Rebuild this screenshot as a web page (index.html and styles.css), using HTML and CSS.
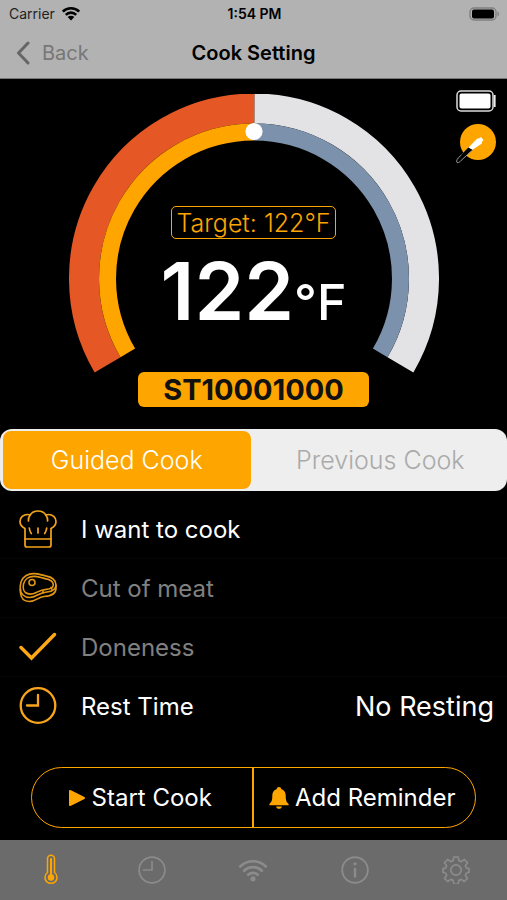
FILE: index.html
```html
<!DOCTYPE html>
<html lang="en">
<head>
<meta charset="utf-8">
<meta name="viewport" content="width=device-width, initial-scale=1">
<title>Cook Setting</title>
<link rel="stylesheet" href="styles.css">
</head>
<body>
<div class="app">
  <header class="top">
    <div class="status">
      <span class="carrier">Carrier
        <svg width="20" height="15" viewBox="0 0 20 15" aria-hidden="true">
          <g fill="none" stroke="#000" stroke-width="2.6">
            <path d="M1.8 5.6a11.6 11.6 0 0 1 16.4 0"/>
            <path d="M4.8 8.8a7.4 7.4 0 0 1 10.4 0"/>
          </g>
          <path d="M10 14.4 6.7 11.1a4.7 4.7 0 0 1 6.6 0z"/>
        </svg>
      </span>
      <time class="clock">1:54 PM</time>
      <svg class="phone-battery" width="31" height="14" viewBox="0 0 31 14" aria-hidden="true">
        <rect x="1" y="1" width="26" height="12" rx="4" fill="none" stroke="#808080" stroke-width="1.4"/>
        <rect x="3" y="2.500" width="22" height="9" rx="2"/>
        <path d="M28.5 4.500v5c2-.8 2-4.200 0-5z" fill="#808080"/>
      </svg>
    </div>
    <div class="titlebar">
      <a class="back" href="#back">
        <svg width="14" height="24" viewBox="0 0 14 24" aria-hidden="true"><path d="M12 2 2.500 12 12 22" fill="none" stroke="#666" stroke-width="3" stroke-linecap="round" stroke-linejoin="round"/></svg>
        Back
      </a>
      <h1>Cook Setting</h1>
    </div>
  </header>

  <main>
    <section class="probe">
      <div class="gauge">
        <svg class="dial" viewBox="0 0 370 279" aria-hidden="true">
          <g fill="none">
            <path d="M38.530 270.800A170 170 0 0 1 185.500 14.500" stroke="#e55725" stroke-width="30"/>
            <path d="M185.500 14.500A170 170 0 0 1 331.470 270.800" stroke="#e3e3e5" stroke-width="30"/>
            <path d="M58.800 258.850A146.500 146.500 0 0 1 185 38" stroke="#ffa500" stroke-width="17"/>
            <path d="M185 38A146.500 146.500 0 0 1 311.200 258.850" stroke="#7c92ac" stroke-width="17"/>
          </g>
          <circle cx="185" cy="37.500" r="8.600" fill="#fff"/>
        </svg>
        <div class="reading">
          <span class="target">Target: 122°F</span>
          <strong class="temp">122<small>°F</small></strong>
        </div>
      </div>
      <div class="indicators">
        <svg width="40" height="22" viewBox="0 0 40 22" role="img" aria-label="Probe battery full">
          <rect x="1" y="1" width="36" height="20" rx="4" fill="none" stroke="#ddd" stroke-width="1.500"/>
          <rect x="3.500" y="3.500" width="31" height="15" rx="2" fill="#fff"/>
          <path d="M38.700 5v12" stroke="#eee" stroke-width="1.800"/>
        </svg>
        <svg width="40" height="40" viewBox="0 0 40 40" role="img" aria-label="Probe inserted">
          <circle cx="22" cy="18" r="18" fill="#ffa500"/>
          <path d="M13 23.500 2.200 34C.5 36 .2 38.200 1.200 38.600c1.500.4 3-1 4-2.200L16.500 26z" fill="#000" stroke="#999" stroke-width="1"/>
          <path d="M12.500 23.500 5 31l1.500 2L16.500 25.500z" fill="#000"/>
          <path d="m12.500 23.500 8.500-8.800 3.200-.7.500-1.200 3 3.400-1.200.6-.9 3-9.100 6z" fill="#fff"/>
        </svg>
      </div>
      <div class="serial">ST10001000</div>
    </section>

    <div class="segments" role="tablist">
      <button class="segment selected" type="button" role="tab" aria-selected="true">Guided Cook</button>
      <button class="segment" type="button" role="tab" aria-selected="false">Previous Cook</button>
    </div>

    <ul class="settings">
      <li><button class="setting" type="button">
        <svg width="38" height="38" viewBox="0 0 38 38" aria-hidden="true">
          <g fill="none" stroke="#f5a31c" stroke-width="1.700" stroke-linecap="round" stroke-linejoin="round">
            <path d="M6 29V18.500C2.800 17 1 14.400 1 11.500 1 7.400 4.500 4.500 8.500 4.500c1 0 1.900.1 2.700.5C12.700 2.500 15.600 1 19 1s6.300 1.500 7.800 4c.8-.4 1.700-.5 2.700-.5 4 0 7.500 2.900 7.500 7 0 2.900-1.800 5.500-5 7V29z"/>
            <path d="M6 29v6q0 2 2 2h22q2 0 2-2v-6"/>
            <path d="M11.200 5C9.800 6.800 9.200 8.700 9.400 11M26.800 5c1.400 1.800 2 3.700 1.800 6M19 18v5M10.300 18q.3 3 2 5.500M27.700 18q-.3 3-2 5.500"/>
          </g>
        </svg>
        <span class="name">I want to cook</span></button></li>
      <li><button class="setting" type="button" disabled>
        <svg width="38" height="38" viewBox="0 0 38 38" aria-hidden="true">
          <g fill="none" stroke="#e39615" stroke-width="1.600" stroke-linecap="round" stroke-linejoin="round">
            <path d="M2 13C3.500 7.500 9 4.500 15 4.600c5 .1 7 1.400 11.500 2.300C33 8 37 11 37 16c0 4.500-4 6.500-9 7-5 .4-6 1-9.500 3C14 28.500 8 29.500 4 26 .8 23 1 17 2 13z"/>
            <path d="M4.500 15C5.500 10 10 7.400 15 7.400c4.500 0 7 1.500 11 2.200 5 .9 8.300 3 8.300 6.200 0 3-3 4.300-7 4.600-5 .4-7 1.600-10 3.100-4 2-8.300 2-11 0C4 21.500 4 18 4.500 15z"/>
            <path d="M1.300 20v3c.5 6 4 9.500 9 9.500 7 0 8.700-4.500 14.700-5 7-.5 12-2.500 12-8V16"/>
            <circle cx="13" cy="13.500" r="3"/>
            <path d="M24 22v2M32 18.500l1 2"/>
          </g>
        </svg>
        <span class="name">Cut of meat</span></button></li>
      <li><button class="setting" type="button" disabled>
        <svg width="38" height="38" viewBox="0 0 38 38" aria-hidden="true"><path d="m2 19.500 10.500 10.500L35.500 6.500" fill="none" stroke="#ffa817" stroke-width="3.400" stroke-linecap="round"/></svg>
        <span class="name">Doneness</span></button></li>
      <li><button class="setting" type="button">
        <svg width="38" height="38" viewBox="0 0 38 38" aria-hidden="true"><g fill="none" stroke="#f9a51b" stroke-width="2.300" stroke-linecap="round"><circle cx="19" cy="18.500" r="17.300"/><path d="M19 8v10.500H8"/></g></svg>
        <span class="name">Rest Time</span><span class="value">No Resting</span></button></li>
    </ul>

    <div class="actions">
      <button type="button">
        <svg width="18" height="18" viewBox="0 0 18 18" aria-hidden="true"><path d="M2 2v14l14-7z" fill="#ffa500" stroke="#ffa500" stroke-width="2" stroke-linejoin="round"/></svg>
        Start Cook
      </button>
      <button type="button">
        <svg width="20" height="22" viewBox="0 0 20 22" aria-hidden="true"><path d="M10 0c1.300 0 2.200.8 2.200 2 3 1 4.500 3.300 4.500 6.500 0 5 .8 6.500 2.500 8 .8.800.6 1.800-.5 1.800H1.300c-1.100 0-1.300-1-.5-1.800 1.700-1.500 2.500-3 2.500-8C3.300 5.300 4.800 3 7.800 2c0-1.200.9-2 2.200-2zM7 19.400h6C12.500 21 11.500 21.800 10 21.800S7.500 21 7 19.400z" fill="#ffa500"/></svg>
        Add Reminder
      </button>
    </div>
  </main>

  <nav class="tabs">
    <a href="#temperature" aria-label="Temperature" aria-current="page">
      <svg width="16" height="32" viewBox="0 0 16 32"><g fill="none" stroke="currentColor"><path d="M4.500 18.500V4.800a3.500 3.500 0 0 1 7 0v13.700a6 6 0 1 1-7 0z" stroke-width="1.500"/><circle cx="8" cy="23.500" r="3.200" fill="currentColor" stroke="none"/><path d="M8 5v18" stroke-width="2" stroke-linecap="round"/></g></svg>
    </a>
    <a href="#timer" aria-label="Timer">
      <svg width="28" height="28" viewBox="0 0 28 28"><g fill="none" stroke="currentColor" stroke-width="1.700" stroke-linecap="round"><circle cx="14" cy="14" r="12.900"/><path d="M14 5.500V14H5.500"/></g></svg>
    </a>
    <a href="#wifi" aria-label="Wi-Fi">
      <svg width="30" height="24" viewBox="0 0 30 24"><g fill="none" stroke="currentColor" stroke-width="2.700" stroke-linecap="round"><path d="M2.200 8.500a18.200 18.200 0 0 1 25.600 0"/><path d="M6.200 12.800a12.500 12.500 0 0 1 17.600 0"/><path d="M10.200 16.800a6.800 6.800 0 0 1 9.600 0"/></g><circle cx="15" cy="20.800" r="2.600" fill="currentColor"/></svg>
    </a>
    <a href="#info" aria-label="Information">
      <svg width="28" height="28" viewBox="0 0 28 28"><g fill="none" stroke="currentColor"><circle cx="14" cy="14" r="12.800" stroke-width="1.900"/><path d="M14 12v9.500" stroke-width="2.400"/></g><circle cx="14" cy="7.800" r="1.600" fill="currentColor"/></svg>
    </a>
    <a href="#settings" aria-label="Settings">
      <svg width="28" height="28" viewBox="0 0 28 28"><g fill="none" stroke="currentColor" stroke-width="1.700" stroke-linejoin="round"><path d="M11.800 1h4.400l.7 3.600 2.400 1 3-2.100 3.200 3.200-2.100 3 1 2.400 2.600.5v3.800l-2.600.6-1 2.400 2.100 3-3.200 3.100-3-2.100-2.400 1-.7 3.600h-4.400l-.7-3.600-2.400-1-3 2.100-3.200-3.100 2.100-3-1-2.400-2.600-.6v-3.800l2.600-.5 1-2.400-2.100-3 3.200-3.200 3 2.100 2.400-1z"/><circle cx="14" cy="14" r="5.200"/></g></svg>
    </a>
  </nav>
</div>
</body>
</html>
```
FILE: styles.css
```css
* { box-sizing: border-box; }

body {
  margin: 0;
  background: #000;
  color: #fff;
  font-family: Inter, "Liberation Sans", sans-serif;
}

svg { display: block; flex: none; }

button {
  border: 0;
  background: none;
  color: inherit;
  font: inherit;
}

a { text-decoration: none; }

.app {
  display: flex;
  flex-direction: column;
  min-height: 100vh;
}

/* Status and title bars */
.top {
  background: #b2b2b2;
  border-bottom: 1px solid #777;
  color: #000;
}

.status {
  display: grid;
  grid-template-columns: 1fr auto 1fr;
  align-items: center;
  height: 27px;
  padding: 0 7px 0 9px;
  font-size: 14px;
}

.carrier {
  display: flex;
  align-items: center;
  gap: 6px;
  color: #222;
}

.clock { font-weight: 600; }

.phone-battery { justify-self: end; }

.titlebar {
  display: grid;
  grid-template-columns: 1fr auto 1fr;
  align-items: center;
  height: 51px;
  padding: 0 16px;
}

.titlebar h1 {
  margin: 0;
  font-size: 20px;
  font-weight: 600;
}

.back {
  display: flex;
  align-items: center;
  gap: 12px;
  color: #777;
  font-size: 20px;
}

/* Probe gauge */
.probe {
  display: grid;
  grid-template-columns: 1fr minmax(0, 370px) 1fr;
  padding: 15px 0 22px;
}

.gauge {
  display: grid;
  grid-column: 2;
}

.dial {
  grid-area: 1 / 1;
  width: 100%;
}

.reading {
  grid-area: 1 / 1;
  display: flex;
  flex-direction: column;
  align-items: center;
  padding-top: 112px;
}

.target {
  padding: 1px 4px 0;
  border: 1px solid #ffa500;
  border-radius: 5px;
  color: #ffa500;
  font-size: 25px;
  font-weight: 300;
  line-height: 30px;
}

.temp {
  margin-top: 12px;
  font-size: 80px;
  font-weight: 600;
  line-height: 80px;
}

.temp small {
  font-size: 50px;
  font-weight: 500;
}

.indicators {
  grid-column: 3;
  display: flex;
  flex-direction: column;
  align-items: flex-end;
  gap: 12px;
  margin-top: -4px;
  padding-right: 11px;
}

.serial {
  grid-column: 2;
  justify-self: center;
  width: 231px;
  margin-top: -1px;
  border-radius: 6px;
  background: #ffa500;
  color: #111;
  font-size: 29px;
  font-weight: 700;
  line-height: 35px;
  text-align: center;
}

/* Cook mode switch */
.segments {
  display: grid;
  grid-template-columns: 1fr 1fr;
  gap: 6px;
  padding: 2px 3px;
  border-radius: 12px;
  background: #eee;
}

.segment {
  height: 58px;
  border-radius: 8px;
  color: #aaa;
  font-size: 25px;
  font-weight: 300;
}

.segment.selected {
  background: #ffa500;
  color: #fff;
}

/* Setting rows */
.settings {
  margin: 9px 0 32px;
  padding: 0;
  list-style: none;
}

.settings li + li { border-top: 1px solid #060606; }

.setting {
  display: flex;
  align-items: center;
  gap: 24px;
  width: 100%;
  height: 58px;
  padding: 0 13px 0 19px;
  font-size: 24px;
}

.setting:disabled { color: #808080; }

.value {
  margin-left: auto;
  font-size: 27px;
}

/* Cook actions */
.actions {
  display: grid;
  grid-template-columns: 1fr 1fr;
  margin: 0 31px 12px;
  border: 1px solid #ffa500;
  border-radius: 31px;
}

.actions button {
  display: flex;
  align-items: center;
  justify-content: center;
  gap: 6px;
  height: 59px;
  padding: 0 4px 0 0;
  font-size: 24px;
}

.actions button:first-child { border-right: 2px solid #ffa500; }

/* Bottom navigation */
.tabs {
  display: grid;
  grid-template-columns: repeat(5, 1fr);
  height: 60px;
  margin-top: auto;
  background: #6b6b6b;
}

.tabs a {
  display: grid;
  place-items: center;
  color: #8b8b8b;
}

.tabs a[aria-current] { color: #ffa500; }
```
